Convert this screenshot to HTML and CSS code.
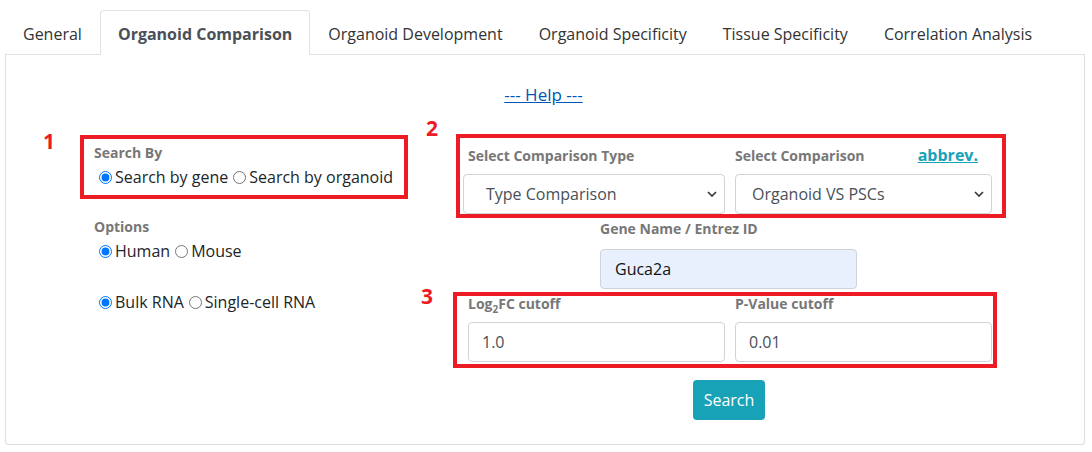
FILE: index.html
```html
<!DOCTYPE html>
<html lang="en">
<head>
  <meta charset="UTF-8" />
  <title>Organoid Comparison</title>
  <link rel="stylesheet" href="styles.css">
</head>
<body>
  <div class="page">
    <ul class="tabs">
      <li><a href="#">General</a></li>
      <li><a href="#" class="active">Organoid Comparison</a></li>
      <li><a href="#">Organoid Development</a></li>
      <li><a href="#">Organoid Specificity</a></li>
      <li><a href="#">Tissue Specificity</a></li>
      <li><a href="#">Correlation Analysis</a></li>
    </ul>

    <div class="panel">
      <div class="help"><a href="#">--- Help ---</a></div>

      <form class="form">
        <div class="left">
          <div class="label">Search By</div>
          <div class="radios">
            <label><input type="radio" name="by" checked>Search by gene</label><label><input type="radio" name="by">Search by organoid</label>
          </div>

          <div class="label spaced">Options</div>
          <div class="radios">
            <label><input type="radio" name="sp" checked>Human</label><label><input type="radio" name="sp">Mouse</label>
          </div>

          <div class="radios spaced">
            <label><input type="radio" name="rna" checked>Bulk RNA</label><label><input type="radio" name="rna">Single-cell RNA</label>
          </div>
        </div>

        <div class="right">
          <div class="pair">
            <div class="field">
              <div class="label indent">Select Comparison Type</div>
              <select class="select first">
                <option>Type Comparison</option>
              </select>
            </div>
            <div class="field">
              <div class="label split">Select Comparison <a href="#" class="abbrev">abbrev.</a></div>
              <select class="select">
                <option>Organoid VS PSCs</option>
              </select>
            </div>
          </div>

          <div class="gene">
            <div class="label gene-label">Gene Name / Entrez ID</div>
            <input type="text" class="input filled" value="Guca2a">
          </div>

          <div class="pair">
            <div class="field indent">
              <div class="label">Log<sub>2</sub>FC cutoff</div>
              <input type="text" class="input" value="1.0">
            </div>
            <div class="field">
              <div class="label">P-Value cutoff</div>
              <input type="text" class="input" value="0.01">
            </div>
          </div>

          <div class="actions">
            <button type="button" class="btn">Search</button>
          </div>
        </div>
      </form>

      <!-- screenshot annotations -->
      <span class="num n1">1</span>
      <span class="num n2">2</span>
      <span class="num n3">3</span>
      <div class="mark m1"></div>
      <div class="mark m2"></div>
      <div class="mark m3"></div>
    </div>
  </div>
</body>
</html>
```

FILE: styles.css
```css
body {
  margin: 0;
  font-family: "Open Sans", "Noto Sans", sans-serif;
  font-size: 16px;
  color: #333;
  background: #fff;
}
.page {
  padding: 10px 7px 0 5px;
}
.tabs {
  list-style: none;
  margin: 0;
  padding: 0;
  display: flex;
  height: 44px;
  border-bottom: 1px solid #dee2e6;
}
.tabs a {
  display: block;
  height: 45px;
  box-sizing: border-box;
  padding: 2px 17px 0;
  line-height: 43px;
  color: #333;
  text-decoration: none;
  border: 1px solid transparent;
  border-radius: 4px 4px 0 0;
}
.tabs a.active {
  font-weight: 700;
  color: #495057;
  background: #fff;
  border-color: #dee2e6 #dee2e6 #fff;
}
.panel {
  position: relative;
  border: 1px solid #ddd;
  border-top: none;
  border-radius: 0 0 4px 4px;
  padding: 28px 91px 24px 88px;
}
.help {
  text-align: center;
  line-height: 24px;
}
.help a {
  color: #0056b3;
  text-decoration: underline;
  font-size: 17px;
}
.form {
  display: flex;
  margin-top: 35px;
}
.left {
  width: 369px;
  flex: none;
}
.right {
  width: 529px;
  flex: none;
  padding-top: 3px;
}
.label {
  font-size: 14px;
  font-weight: 700;
  color: #777;
  line-height: 21px;
}
.label sub {
  font-size: 10px;
  line-height: 0;
}
.left .label {
  margin-bottom: 2px;
}
.left .spaced {
  margin-top: 27px;
}
.radios {
  line-height: 24px;
  color: #212529;
}
.radios input {
  margin: 0 3px 0 5px;
  width: 13px;
  height: 13px;
  vertical-align: -1px;
}
.pair {
  display: grid;
  grid-template-columns: 262px 257px;
  gap: 10px;
}
.field .label {
  margin-bottom: 8px;
}
.indent {
  padding-left: 5px;
}
.split {
  display: flex;
  justify-content: space-between;
  align-items: center;
  padding-right: 14px;
}
.abbrev {
  color: #17a2b8;
  font-size: 16px;
  text-decoration: underline;
}
.select, .input {
  display: block;
  width: 100%;
  height: 40px;
  box-sizing: border-box;
  border: 1px solid #ced4da;
  border-radius: 4px;
  font-family: inherit;
  font-size: 16px;
  color: #495057;
  background: #fff;
}
.select {
  appearance: none;
  padding: 0 28px 0 16px;
  background: #fff url("data:image/svg+xml,%3Csvg xmlns='http://www.w3.org/2000/svg' width='10' height='6' viewBox='0 0 10 6'%3E%3Cpath d='M1 1l4 4 4-4' fill='none' stroke='%23333' stroke-width='1.6'/%3E%3C/svg%3E") no-repeat right 7px center;
}
.select.first {
  padding-left: 22px;
}
.input {
  padding: 0 13px;
}
.gene {
  width: 257px;
  margin: 4px auto 0;
  position: relative;
  left: 1px;
}
.gene-label {
  margin-bottom: 10px;
}
.input.filled {
  background: #e8f0fe;
  color: #111;
  padding-left: 14px;
}
.gene + .pair {
  margin-top: 4px;
}
.actions {
  text-align: center;
  margin-top: 18px;
  padding-left: 3px;
}
.btn {
  height: 40px;
  padding: 0 11px;
  border: none;
  border-radius: 4px;
  background: #17a2b8;
  color: #fff;
  font-family: inherit;
  font-size: 16px;
}
.num {
  position: absolute;
  font-size: 21px;
  font-weight: 700;
  line-height: 21px;
  color: #ed1c24;
}
.n1 { left: 37px; top: 76px; }
.n2 { left: 420px; top: 63px; }
.n3 { left: 415px; top: 231px; }
.mark {
  position: absolute;
  border: 4px solid #ed1c24;
  box-sizing: border-box;
}
.m1 { left: 74px; top: 80px; width: 328px; height: 64px; }
.m2 { left: 450px; top: 79px; width: 550px; height: 84px; }
.m3 { left: 447px; top: 237px; width: 544px; height: 76px; }
```
